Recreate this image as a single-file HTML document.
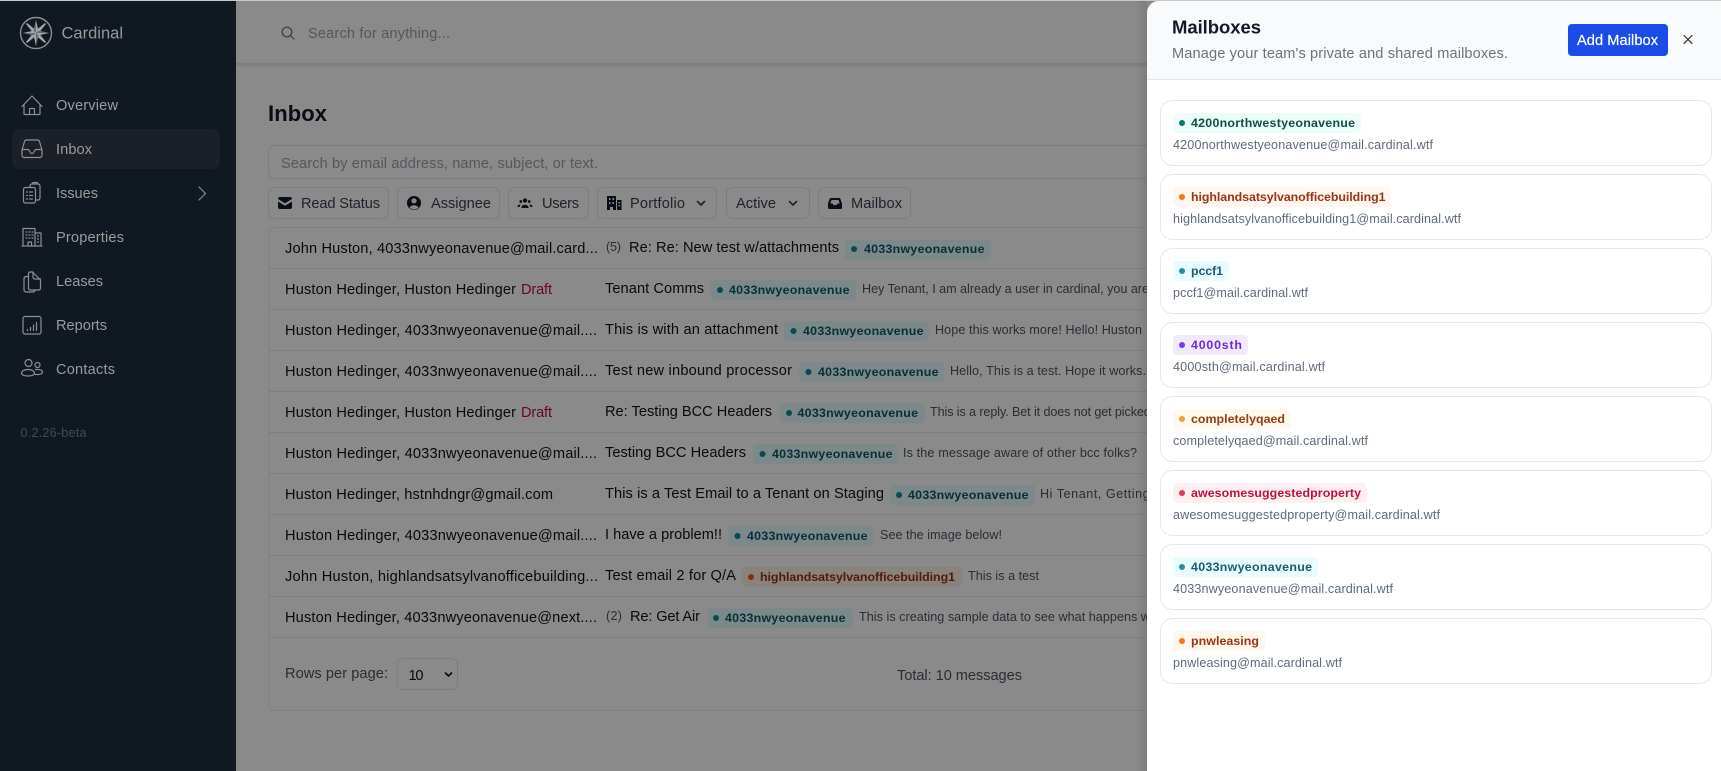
<!DOCTYPE html>
<html lang="en"><head><meta charset="utf-8"><title>Cardinal Inbox</title>
<style>
html,body{margin:0;padding:0;width:1721px;height:771px;overflow:hidden;background:#8a8a8a}
svg{display:block}
text{font-family:"Liberation Sans",sans-serif;white-space:pre}
.b{font-size:14.600px;fill:#111}
.s{font-size:14.600px;fill:#111}
.p{font-size:12.600px;fill:#4b5563}
.t{font-size:12.400px;font-weight:700;fill:#0e5a68}
.n{font-size:14.600px;fill:#9b9b9b}
.f{font-size:14.600px;fill:#374151}
.e{font-size:12.600px;fill:#5f6b7a}
.ic{fill:none;stroke:#8f8f8f;stroke-width:1.2;stroke-linecap:round;stroke-linejoin:round}
</style></head><body>
<svg width="1721" height="771" viewBox="0 0 1721 771" xmlns="http://www.w3.org/2000/svg">
<defs><linearGradient id="sh" x1="0" x2="1"><stop offset="0" stop-color="#000" stop-opacity="0"/><stop offset="1" stop-color="#000" stop-opacity=".1"/></linearGradient></defs>

<!-- main -->
<rect width="1721" height="771" fill="#ffffff"/>
<rect x="236" y="63" width="1000" height="2" fill="#e5e7eb"/>
<rect x="236" y="65" width="1000" height="2" fill="#f3f4f6"/>
<g fill="none" stroke="#6b7280" stroke-width="1.2" stroke-linecap="round"><circle cx="287" cy="32" r="4.800"/><path d="M290.500 35.500l3.500 3.500"/></g>
<text x="308" y="38" font-size="14.600" fill="#9ca3af" textLength="142">Search for anything...</text>
<text x="268" y="121" font-size="22" font-weight="700" fill="#111827" textLength="59">Inbox</text>
<rect x="268.500" y="145.500" width="1000" height="33" rx="6" fill="#fff" stroke="#e5e7eb"/>
<text x="281" y="168" font-size="14.600" fill="#9ca3af" textLength="317">Search by email address, name, subject, or text.</text>

<!-- filter buttons -->
<g fill="#fff" stroke="#e5e7eb">
<rect x="268.500" y="187.500" width="120" height="31" rx="6"/>
<rect x="397.500" y="187.500" width="102" height="31" rx="6"/>
<rect x="508.500" y="187.500" width="80" height="31" rx="6"/>
<rect x="597.500" y="187.500" width="119" height="31" rx="6"/>
<rect x="726.500" y="187.500" width="83" height="31" rx="6"/>
<rect x="818.500" y="187.500" width="92" height="31" rx="6"/>
</g>
<text class="f" x="301" y="208" textLength="79">Read Status</text>
<text class="f" x="431" y="208" textLength="60">Assignee</text>
<text class="f" x="542" y="208" textLength="37">Users</text>
<text class="f" x="630" y="208" textLength="55">Portfolio</text>
<text class="f" x="736" y="208" textLength="40">Active</text>
<text class="f" x="851" y="208" textLength="51">Mailbox</text>
<!-- filter icons -->
<path d="M278 199a2 2 0 0 1 2-2h10a2 2 0 0 1 2 2l-7 4.200zM278 201.500v5.500a2 2 0 0 0 2 2h10a2 2 0 0 0 2-2v-5.500l-7 4.200z" fill="#111827"/>
<circle cx="414" cy="203" r="7" fill="#111827"/><circle cx="414" cy="200.800" r="2.600" fill="#fff"/><path d="M409.500 207.500a5 4 0 0 1 9 0a6 6 0 0 1-9 0z" fill="#fff"/>
<g fill="#111827"><circle cx="525" cy="200.500" r="2.100"/><circle cx="520.800" cy="201.500" r="1.400"/><circle cx="529.200" cy="201.500" r="1.400"/><path d="M521.300 208a3.700 3.300 0 0 1 7.400 0zM519.500 207h-2a2.500 2.500 0 0 1 3-2.500zM530.500 207h2a2.500 2.500 0 0 0-3-2.500z"/></g>
<path fill-rule="evenodd" d="M607 196h9v14h-3v-3h-3v3h-3zM609 198v2h1.500v-2zM612.500 198v2h1.500v-2zM609 202v2h1.500v-2zM612.500 202v2h1.500v-2zM617 200h4.500v10H617zM618.500 202v1.500H620V202zM618.500 205v1.500H620V205z" fill="#111827"/>
<g fill="none" stroke="#374151" stroke-width="1.600" stroke-linecap="round" stroke-linejoin="round"><path d="M697.500 201.500l3.500 3.500 3.500-3.500"/><path d="M789.500 201.500l3.500 3.500 3.500-3.500"/></g>
<path d="M831 198h8a1.500 1.500 0 0 1 1.400 1l1.600 4.500v4a1.500 1.500 0 0 1-1.500 1.500h-11a1.500 1.500 0 0 1-1.500-1.500v-4l1.600-4.500a1.500 1.500 0 0 1 1.400-1z" fill="#111827"/>
<path d="M831.500 200h7l1.200 3.500h-2.200l-1 1.500h-3l-1-1.500h-2.200z" fill="#fff"/>

<!-- table -->
<rect x="268.500" y="227.500" width="1000" height="483" rx="6" fill="#fff" stroke="#eceef1"/>
<g stroke="#e8eaed"><path d="M269 268.500h1000M269 309.500h1000M269 350.500h1000M269 391.500h1000M269 432.500h1000M269 473.500h1000M269 514.500h1000M269 555.500h1000M269 596.500h1000M269 637.500h1000"/></g>

<!-- rows -->
<text class="b" x="285" y="253" textLength="313">John Huston, 4033nwyeonavenue@mail.card...</text>
<text x="606" y="251" font-size="12.600" fill="#4b5563" textLength="15">(5)</text>
<text class="s" x="629" y="252" textLength="210">Re: Re: New test w/attachments</text>

<text class="b" x="285" y="294" textLength="231">Huston Hedinger, Huston Hedinger</text>
<text x="521" y="294" font-size="14.600" fill="#be123c" textLength="31">Draft</text>
<text class="s" x="605" y="293" textLength="99">Tenant Comms</text>
<text class="p" x="862" y="293" textLength="287">Hey Tenant, I am already a user in cardinal, you are</text>

<text class="b" x="285" y="335" textLength="312">Huston Hedinger, 4033nwyeonavenue@mail....</text>
<text class="s" x="605" y="334" textLength="173">This is with an attachment</text>
<text class="p" x="935" y="334" textLength="207">Hope this works more! Hello! Huston</text>

<text class="b" x="285" y="376" textLength="312">Huston Hedinger, 4033nwyeonavenue@mail....</text>
<text class="s" x="605" y="375" textLength="187">Test new inbound processor</text>
<text class="p" x="950" y="375" textLength="196">Hello, This is a test. Hope it works.</text>

<text class="b" x="285" y="417" textLength="231">Huston Hedinger, Huston Hedinger</text>
<text x="521" y="417" font-size="14.600" fill="#be123c" textLength="31">Draft</text>
<text class="s" x="605" y="416" textLength="167">Re: Testing BCC Headers</text>
<text class="p" x="930" y="416" textLength="238">This is a reply. Bet it does not get picked up</text>

<text class="b" x="285" y="458" textLength="312">Huston Hedinger, 4033nwyeonavenue@mail....</text>
<text class="s" x="605" y="457" textLength="141">Testing BCC Headers</text>
<text class="p" x="903" y="457" textLength="234">Is the message aware of other bcc folks?</text>

<text class="b" x="285" y="499" textLength="268">Huston Hedinger, hstnhdngr@gmail.com</text>
<text class="s" x="605" y="498" textLength="279">This is a Test Email to a Tenant on Staging</text>
<text class="p" x="1040" y="498" textLength="177">Hi Tenant, Getting this to you</text>

<text class="b" x="285" y="540" textLength="312">Huston Hedinger, 4033nwyeonavenue@mail....</text>
<text class="s" x="605" y="539" textLength="117">I have a problem!!</text>
<text class="p" x="880" y="539" textLength="122">See the image below!</text>

<text class="b" x="285" y="581" textLength="313">John Huston, highlandsatsylvanofficebuilding...</text>
<text class="s" x="605" y="580" textLength="131">Test email 2 for Q/A</text>
<text class="p" x="968" y="580" textLength="71">This is a test</text>

<text class="b" x="285" y="622" textLength="312">Huston Hedinger, 4033nwyeonavenue@next....</text>
<text x="606" y="620" font-size="12.600" fill="#4b5563" textLength="16">(2)</text>
<text class="s" x="630" y="621" textLength="70">Re: Get Air</text>
<text class="p" x="859" y="621" textLength="291">This is creating sample data to see what happens w</text>

<!-- row tags -->
<g fill="#e6fbfe">
<rect x="845" y="239.500" width="146" height="20" rx="4"/>
<rect x="711" y="280" width="145" height="20" rx="4"/>
<rect x="784" y="321" width="145" height="20" rx="4"/>
<rect x="799" y="362" width="145" height="20" rx="4"/>
<rect x="780" y="403" width="145" height="20" rx="4"/>
<rect x="753" y="444" width="145" height="20" rx="4"/>
<rect x="890" y="485" width="145" height="20" rx="4"/>
<rect x="728" y="526" width="145" height="20" rx="4"/>
<rect x="708" y="608" width="145" height="20" rx="4"/>
</g>
<rect x="742" y="567" width="220" height="20" rx="4" fill="#fff1e6"/>
<g fill="#0e8a9e">
<circle cx="854" cy="249" r="3"/><circle cx="720" cy="290" r="3"/><circle cx="793.500" cy="331" r="3"/><circle cx="808.500" cy="372" r="3"/><circle cx="789" cy="413" r="3"/><circle cx="762.500" cy="454" r="3"/><circle cx="899" cy="495" r="3"/><circle cx="737.500" cy="536" r="3"/><circle cx="716" cy="618" r="3"/>
</g>
<circle cx="751" cy="577" r="3" fill="#f05a12"/>
<text class="t" x="864" y="253" textLength="120.500">4033nwyeonavenue</text>
<text class="t" x="729" y="294" textLength="120.500">4033nwyeonavenue</text>
<text class="t" x="803" y="335" textLength="120.500">4033nwyeonavenue</text>
<text class="t" x="818" y="376" textLength="120.500">4033nwyeonavenue</text>
<text class="t" x="797.500" y="417" textLength="120.500">4033nwyeonavenue</text>
<text class="t" x="772" y="458" textLength="120.500">4033nwyeonavenue</text>
<text class="t" x="908" y="499" textLength="120.500">4033nwyeonavenue</text>
<text class="t" x="747" y="540" textLength="120.500">4033nwyeonavenue</text>
<text class="t" x="725" y="622" textLength="120.500">4033nwyeonavenue</text>
<text class="t" x="760" y="581" textLength="195" style="fill:#9a3412">highlandsatsylvanofficebuilding1</text>

<!-- footer -->
<text x="285" y="678" font-size="14.600" fill="#4b5563" textLength="103">Rows per page:</text>
<rect x="397" y="658.500" width="60.500" height="31" rx="6" fill="#fff" stroke="#e5e7eb"/>
<text x="408.500" y="680" font-size="14.600" fill="#111" textLength="15">10</text>
<path d="M445.500 673l3 3 3-3" fill="none" stroke="#111" stroke-width="1.600" stroke-linecap="round"/>
<text x="897" y="680" font-size="14.600" fill="#4b5563" textLength="125">Total: 10 messages</text>

<!-- overlay -->
<rect width="1721" height="771" fill="#000" fill-opacity=".46"/>

<!-- sidebar -->
<rect width="236" height="771" fill="#101822"/>
<circle cx="36" cy="33" r="15.500" fill="none" stroke="#8f8f8f" stroke-width="1.400"/>
<g fill="#a6a6a6">
<path d="M36 20l2.400 10.600L49 33l-10.600 2.400L36 46l-2.400-10.600L23 33l10.600-2.400z"/>
<path d="M27 24l8 6.500 1 2.500-2.500-1zM45 24l-6.500 8-2.500 1 1-2.500zM45 42l-8-6.500-1-2.500 2.500 1zM27 42l6.500-8 2.500-1-1 2.500z" stroke="#a6a6a6" stroke-width="1.600" stroke-linejoin="round"/>
</g>
<path d="M36 20l-2.400 10.600L36 33zM49 33l-10.600-2.400L36 33zM36 46l2.400-10.600L36 33zM23 33l10.600 2.400L36 33z" fill="#6a6e74"/>
<text x="61.500" y="38.500" font-size="16.500" fill="#979797" textLength="61.500">Cardinal</text>

<rect x="12" y="129" width="208" height="40" rx="8" fill="#1a1f28"/>
<text class="n" x="56" y="110" textLength="62">Overview</text>
<text class="n" x="56" y="154" textLength="36">Inbox</text>
<text class="n" x="56" y="198" textLength="42">Issues</text>
<text class="n" x="56" y="242" textLength="68">Properties</text>
<text class="n" x="56" y="286" textLength="47">Leases</text>
<text class="n" x="56" y="330" textLength="51">Reports</text>
<text class="n" x="56" y="374" textLength="59">Contacts</text>
<text x="20.500" y="437" font-size="12.600" fill="#45494f" textLength="66">0.2.26-beta</text>

<!-- sidebar icons -->
<g class="ic">
<path d="M22 106.500l10-10.500 10 10.500M24 104.500v9a1 1 0 0 0 1 1h14a1 1 0 0 0 1-1v-9M29.500 114.500v-5a1 1 0 0 1 1-1h3a1 1 0 0 1 1 1v5"/>
<path d="M22 150v5.500a2 2 0 0 0 2 2h16a2 2 0 0 0 2-2V150l-2.500-8.500a2 2 0 0 0-2-1.500h-11a2 2 0 0 0-2 1.500zM22.500 149.500h5c1 0 1.500.5 2 1.500l.5 1c.5 1 1 1.500 2 1.500s1.500-.5 2-1.500l.5-1c.5-1 1-1.500 2-1.500h5"/>
<path d="M29.500 187.500h-4a2 2 0 0 0-2 2v11.500a2 2 0 0 0 2 2h8a2 2 0 0 0 2-2v-11.500a2 2 0 0 0-2-2zM30 187.500v-1.500a2 2 0 0 1 2-2h6a2 2 0 0 1 2 2v12a2 2 0 0 1-2 2h-2.500M32 184a2 2 0 0 1 2-1.500h2a2 2 0 0 1 2 1.500M26.500 192h1M29.500 192h3M26.500 195.500h1M29.500 195.500h3M26.500 199h1M29.500 199h3"/>
<path d="M23 246v-17.500h12V246M35 233h6v13M22 246h20M28 246v-4h3.500v4M26 232h1M29 232h1M32 232h1M26 235h1M29 235h1M32 235h1M26 238h1M29 238h1M32 238h1M37.500 236h1M37.500 239h1M37.500 242h1"/>
<path d="M30 272h2.500l8 8v8a2 2 0 0 1-2 2H30a2 2 0 0 1-1.500-1M30 272a2 2 0 0 0-1.500 2v14a2 2 0 0 0 2 2M33 272v5a2 2 0 0 0 2 2h5.500M28.500 276.500H26a2.500 2.500 0 0 0-2 2v11a2.500 2.500 0 0 0 2 2.500h7a2 2 0 0 0 2-2"/>
<path d="M25 316.500h14a2 2 0 0 1 2 2v13.500a2 2 0 0 1-2 2H25a2 2 0 0 1-2-2v-13.500a2 2 0 0 1 2-2zM27.500 330.500v-1M30.500 330.500v-3M33.500 330.500v-5.500M36.500 330.500v-8"/>
<circle cx="28.500" cy="363" r="3.500"/><circle cx="37.500" cy="365" r="2.500"/>
<path d="M28 369.500c-4 0-6.500 1.700-6.500 3.700 0 1.500 2.500 2.800 6.500 2.800s6.500-1.300 6.500-2.800c0-2-2.500-3.700-6.500-3.700zM35.500 369.500h2.500c2.500 0 4.500 1.200 4.500 2.800 0 1.300-2 2.200-4.500 2.200h-3"/>
<path d="M199 187l6.500 6.500-6.500 6.500" stroke-width="1.200"/>
</g>

<!-- panel -->
<rect x="1135" y="1" width="12" height="770" fill="url(#sh)"/>
<rect x="0" y="0" width="1721" height="1" fill="#c8c8c8"/>
<path d="M1147 771V13a12 12 0 0 1 12-12H1721V771z" fill="#fff"/>
<path d="M1147 79V13a12 12 0 0 1 12-12H1721V79z" fill="#f9fafb"/>
<rect x="1147" y="79" width="574" height="1" fill="#e5e7eb"/>
<text x="1172" y="33.500" font-size="18.500" font-weight="700" fill="#111827" textLength="89">Mailboxes</text>
<text x="1172" y="58" font-size="14.600" fill="#6b7280" textLength="336">Manage your team's private and shared mailboxes.</text>
<rect x="1568" y="24" width="100" height="32" rx="4" fill="#1a4de8"/>
<text x="1577" y="45" font-size="14.600" fill="#fff" stroke="#fff" stroke-width=".2" textLength="81">Add Mailbox</text>
<path d="M1684 35.500l8 8M1692 35.500l-8 8" stroke="#222" stroke-width="1.100" fill="none" stroke-linecap="round"/>

<!-- cards -->
<g fill="#fff" stroke="#e5e7f2">
<rect x="1160.500" y="100.500" width="551" height="65" rx="12"/>
<rect x="1160.500" y="174.500" width="551" height="65" rx="12"/>
<rect x="1160.500" y="248.500" width="551" height="65" rx="12"/>
<rect x="1160.500" y="322.500" width="551" height="65" rx="12"/>
<rect x="1160.500" y="396.500" width="551" height="65" rx="12"/>
<rect x="1160.500" y="470.500" width="551" height="65" rx="12"/>
<rect x="1160.500" y="544.500" width="551" height="65" rx="12"/>
<rect x="1160.500" y="618.500" width="551" height="65" rx="12"/>
</g>
<rect x="1173" y="113" width="188" height="20" rx="4" fill="#ebfdf9"/><circle cx="1182" cy="123" r="3" fill="#0f766e"/>
<text class="t" x="1191" y="127" textLength="164" style="fill:#134e4a">4200northwestyeonavenue</text>
<text class="e" x="1173" y="149" textLength="260">4200northwestyeonavenue@mail.cardinal.wtf</text>

<rect x="1173" y="187" width="218" height="20" rx="4" fill="#fff7ed"/><circle cx="1182" cy="197" r="3" fill="#f97316"/>
<text class="t" x="1191" y="201" textLength="194.500" style="fill:#9a3412">highlandsatsylvanofficebuilding1</text>
<text class="e" x="1173" y="223" textLength="288">highlandsatsylvanofficebuilding1@mail.cardinal.wtf</text>

<rect x="1173" y="261" width="56" height="20" rx="4" fill="#e9fcfd"/><circle cx="1182" cy="271" r="3" fill="#2b8a9e"/>
<text class="t" x="1191" y="275" textLength="32" style="fill:#155e75">pccf1</text>
<text class="e" x="1173" y="297" textLength="135">pccf1@mail.cardinal.wtf</text>

<rect x="1173" y="335" width="75" height="20" rx="4" fill="#efebfc"/><circle cx="1182" cy="345" r="3" fill="#7c3aed"/>
<text class="t" x="1191" y="349" textLength="51" style="fill:#6d28d9">4000sth</text>
<text class="e" x="1173" y="371" textLength="152">4000sth@mail.cardinal.wtf</text>

<rect x="1173" y="409" width="118" height="20" rx="4" fill="#fff8ec"/><circle cx="1182" cy="419" r="3" fill="#f59e2b"/>
<text class="t" x="1191" y="423" textLength="94" style="fill:#92400e">completelyqaed</text>
<text class="e" x="1173" y="445" textLength="195">completelyqaed@mail.cardinal.wtf</text>

<rect x="1173" y="483" width="194" height="20" rx="4" fill="#feeff1"/><circle cx="1182" cy="493" r="3" fill="#dc3b60"/>
<text class="t" x="1191" y="497" textLength="170" style="fill:#be123c">awesomesuggestedproperty</text>
<text class="e" x="1173" y="519" textLength="267">awesomesuggestedproperty@mail.cardinal.wtf</text>

<rect x="1173" y="557" width="145" height="20" rx="4" fill="#e9fcfd"/><circle cx="1182" cy="567" r="3" fill="#2b8a9e"/>
<text class="t" x="1191" y="571" textLength="121" style="fill:#155e75">4033nwyeonavenue</text>
<text class="e" x="1173" y="593" textLength="220">4033nwyeonavenue@mail.cardinal.wtf</text>

<rect x="1173" y="631" width="92" height="20" rx="4" fill="#fff7ed"/><circle cx="1182" cy="641" r="3" fill="#f97316"/>
<text class="t" x="1191" y="645" textLength="68" style="fill:#9a3412">pnwleasing</text>
<text class="e" x="1173" y="667" textLength="169">pnwleasing@mail.cardinal.wtf</text>
</svg>
</body></html>
